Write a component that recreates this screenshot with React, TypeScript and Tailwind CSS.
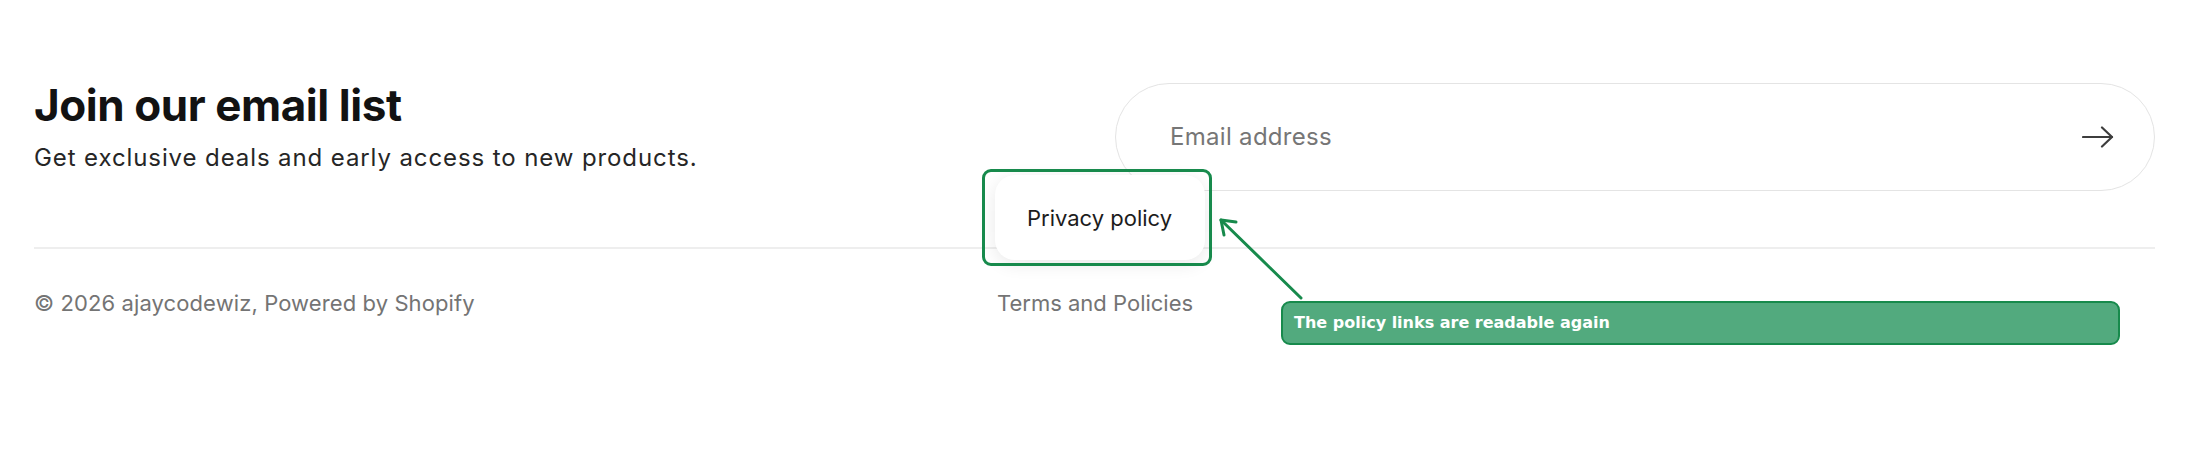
import React from "react";

export default function App() {
  return (
    <div className="relative w-[2200px] h-[460px] overflow-hidden bg-white font-['Inter','Liberation_Sans',sans-serif]">
      <div className="pl-[34px] pr-[45px] pt-[83px]">
        <div className="flex items-start justify-between">
          <div>
            <h2 className="text-[44px] font-bold leading-none tracking-[-0.01em] text-[#121212]">
              Join our email list
            </h2>
            <p className="mt-[19px] text-[24px] leading-none tracking-[0.9px] text-[#262626]">
              Get exclusive deals and early access to new products.
            </p>
          </div>
          <div className="flex h-[108px] w-[1040px] items-center justify-between rounded-full border border-[#e4e4e4] pl-[54px] pr-[40px]">
            <span className="text-[24px] tracking-[0.3px] text-[#767676]">Email address</span>
            <svg width="32" height="22" viewBox="0 0 32 22" fill="none" stroke="#3d3d3d" strokeWidth="2.2" strokeLinecap="round" strokeLinejoin="round">
              <path d="M1 11h29" />
              <path d="M20 1.5l10 9.5-10 9.5" />
            </svg>
          </div>
        </div>
        <div className="mt-[56px] h-[2px] bg-[#eeeeee]" />
        <div className="mt-[43px] flex items-start">
          <div className="w-[963px] text-[22px] leading-none tracking-[0.1px] text-[#747474]">
            © 2026 ajaycodewiz, Powered by Shopify
          </div>
          <div className="relative">
            <div className="text-[22px] leading-none text-[#747474]">Terms and Policies</div>
          </div>
        </div>
      </div>

      {/* policy popover */}
      <div className="absolute left-[995px] top-[175px] flex h-[85px] w-[210px] items-center rounded-[20px] bg-white pl-[32px] shadow-[0_4px_18px_rgba(0,0,0,0.09)]">
        <span className="text-[22px] leading-none text-[#1c1c1c]">Privacy policy</span>
      </div>

      {/* annotation */}
      <div className="absolute left-[982px] top-[169px] h-[97px] w-[230px] rounded-[9px] border-[3px] border-[#178a4c]" />
      <svg className="pointer-events-none absolute left-0 top-0" width="2200" height="460" fill="none">
        <path d="M1301 298L1221 220" stroke="#178a4c" strokeWidth="3" strokeLinecap="round" />
        <path d="M1236 222L1221 220L1224 235" stroke="#178a4c" strokeWidth="3" strokeLinecap="round" strokeLinejoin="round" />
      </svg>
      <div className="absolute left-[1281px] top-[301px] flex h-[44px] w-[839px] items-center rounded-[9px] border-2 border-[#178a4c] bg-[#52aa7e] pl-[11px]">
        <span className="font-['DejaVu_Sans',sans-serif] text-[16px] font-bold leading-none text-white">
          The policy links are readable again
        </span>
      </div>
    </div>
  );
}
